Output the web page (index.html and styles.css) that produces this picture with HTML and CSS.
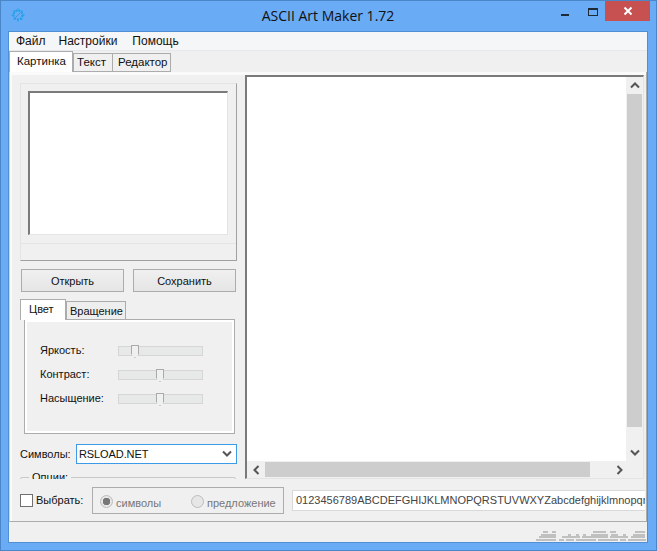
FILE: index.html
```html
<!DOCTYPE html>
<html lang="ru">
<head>
<meta charset="utf-8">
<title>ASCII Art Maker 1.72</title>
<link rel="stylesheet" href="styles.css">
</head>
<body>
<div class="window">
  <header class="titlebar">
    <svg class="app-icon" width="16" height="16" viewBox="0 0 16 16"><circle cx="8" cy="8" r="4.500" fill="none" stroke="#1f9fe8" stroke-width="2" stroke-dasharray="2 1"/><path d="M8 1.500v2M8 12.500v2M1.500 8h2M12.500 8h2M3.500 3.500l1.500 1.500M11 11l1.500 1.500M3.500 12.500L5 11M11 5l1.500-1.500" stroke="#2aa5ea" stroke-width="1.300"/><path d="M6 10l4-4" stroke="#3a95dc" stroke-width="1"/></svg>
    <div class="title">ASCII Art Maker 1.72</div>
    <div class="controls">
      <svg class="ctl" width="27" height="20" viewBox="0 0 27 20"><rect x="5" y="12" width="8" height="2" fill="#1f2a38"/></svg>
      <svg class="ctl" width="22" height="20" viewBox="0 0 22 20"><rect x="5.500" y="7.500" width="9" height="7" fill="none" stroke="#1f2a38" transform="translate(0 -1)"/><rect x="5" y="6" width="10" height="2" fill="#1f2a38"/></svg>
      <div class="close"><svg width="10" height="10" viewBox="0 0 10 10"><path d="M1.500 1.500l7 7M8.500 1.500l-7 7" stroke="#fff" stroke-width="2"/></svg></div>
    </div>
  </header>
  <div class="client">
    <nav class="menu"><span>Файл</span><span>Настройки</span><span>Помощь</span></nav>
    <div class="tabs">
      <div class="tab active">Картинка</div>
      <div class="tab">Текст</div>
      <div class="tab">Редактор</div>
    </div>
    <div class="page">
      <div class="main">
        <div class="left">
          <div class="preview-group">
            <div class="preview"></div>
            <div class="preview-status"></div>
          </div>
          <div class="buttons">
            <button class="btn">Открыть</button>
            <button class="btn">Сохранить</button>
          </div>
          <div class="subtabs">
            <div class="subtab active">Цвет</div>
            <div class="subtab">Вращение</div>
          </div>
          <div class="subpage">
            <div class="slider-row"><label>Яркость:</label><div class="track"><i class="thumb t1"></i></div></div>
            <div class="slider-row"><label>Контраст:</label><div class="track"><i class="thumb t2"></i></div></div>
            <div class="slider-row"><label>Насыщение:</label><div class="track"><i class="thumb t2"></i></div></div>
          </div>
          <div class="symbols">
            <label>Символы:</label>
            <div class="combo"><span>RSLOAD.NET</span>
              <svg width="10" height="7" viewBox="0 0 10 7"><path d="M1 1.500l4 4 4-4" fill="none" stroke="#555" stroke-width="2"/></svg>
            </div>
          </div>
          <fieldset class="options"><legend>Опции:</legend></fieldset>
        </div>
        <div class="viewer">
          <div class="viewer-top">
            <div class="text-area"></div>
            <div class="vscroll">
              <div class="arrow"><svg width="10" height="7" viewBox="0 0 10 7"><path d="M1 5.500l4-4 4 4" fill="none" stroke="#555" stroke-width="2"/></svg></div>
              <div class="vthumb"></div>
              <div class="arrow"><svg width="10" height="7" viewBox="0 0 10 7"><path d="M1 1.500l4 4 4-4" fill="none" stroke="#555" stroke-width="2"/></svg></div>
            </div>
          </div>
          <div class="hscroll">
            <div class="arrow-h"><svg width="7" height="10" viewBox="0 0 7 10"><path d="M5.500 1l-4 4 4 4" fill="none" stroke="#555" stroke-width="2"/></svg></div>
            <div class="hthumb"></div>
            <div class="arrow-h"><svg width="7" height="10" viewBox="0 0 7 10"><path d="M1.500 1l4 4-4 4" fill="none" stroke="#555" stroke-width="2"/></svg></div>
            <div class="corner"></div>
          </div>
        </div>
      </div>
      <div class="bottom">
        <label class="check"><i class="box"></i>Выбрать:</label>
        <div class="radios">
          <span class="radio r1"><i class="dot on"></i><span class="rtext">символы</span></span>
          <span class="radio"><i class="dot"></i><span class="rtext">предложение</span></span>
        </div>
        <div class="charset">0123456789ABCDEFGHIJKLMNOPQRSTUVWXYZabcdefghijklmnopqrstuvwxyz</div>
      </div>
    </div>
    <div class="statusbar">
      <svg width="110" height="10" viewBox="0 0 110 10"><path d="M7 1h5M16 1h4M57 1h13M74 1h6M99 1h10M5 4h15M32 4h3M40 4h3M47 4h3M55 4h17M75 4h7M87 4h3M97 4h12M3 6h17M26 6h18M46 6h26M74 6h18M95 6h14M0 9h20M23 9h5M30 9h8M40 9h20M62 9h20M84 9h6M92 9h18" stroke="#c0c0c0" stroke-width="2" fill="none"/></svg>
    </div>
  </div>
</div>
</body>
</html>
```
FILE: styles.css
```css
* { box-sizing: border-box; }
html, body { margin: 0; padding: 0; }
body { width: 657px; height: 551px; overflow: hidden; font-family: "Liberation Sans", Arial, sans-serif; font-size: 11px; color: #111; }
.window { width: 657px; height: 551px; background: #6aabf5; border: 1px solid #4a86c8; padding: 0 8px 7px 7px; display: flex; flex-direction: column; }
.titlebar { height: 30px; display: flex; align-items: center; flex: none; }
.app-icon { margin-left: 2px; margin-top: -2px; flex: none; }
.title { flex: 1; text-align: center; font-family: "Open Sans", sans-serif; font-size: 14px; color: #111; margin-top: -2px; margin-left: 76px; }
.controls { display: flex; align-items: flex-start; align-self: flex-start; width: 94px; justify-content: flex-end; flex: none; }
.ctl { display: block; margin-top: 1px; }
.close { width: 45px; height: 20px; margin-right: -2px; background: #c75050; display: flex; align-items: center; justify-content: center; }
.client { flex: 1; display: flex; flex-direction: column; background: #f0f0f0; border: 1px solid #4f8fd2; min-height: 0; }
.menu { height: 19px; flex: none; background: #f5f6f7; border-bottom: 1px solid #e8e8e8; display: flex; align-items: center; padding-left: 7px; gap: 14px; font-size: 12px; }
.menu span + span { margin-left: -1px; }
.menu span + span + span { margin-left: 1px; }
.tabs { height: 21px; flex: none; display: flex; align-items: flex-end; background: #f0f0f0; position: relative; z-index: 2; margin-bottom: -1px; font-size: 11.500px; }
.tab { height: 19px; width: 40px; padding: 0 3px; line-height: 17px; background: #f0f0f0; border: 1px solid #acacac; }
.tab + .tab + .tab { padding: 0 3px 0 5px; margin-left: -1px; width: 59px; }
.tab.active { height: 21px; width: 64px; background: #fff; padding: 0 7px; line-height: 18px; border-bottom: 0; }
.page { flex: none; height: 451px; background: #fafafa; border: 1px solid #acacac; border-left-color: #d4d4d4; padding: 3px 0 0 2px; display: flex; flex-direction: column; overflow: hidden; }
.main { height: 404px; flex: none; display: flex; overflow: hidden; background: #f0f0f0; }
.left { width: 233px; flex: none; padding: 8px 0 0 8px; }
.preview-group { width: 217px; height: 178px; border: 1px solid #e4e4e4; border-right-color: #a0a0a0; border-bottom-color: #a0a0a0; padding: 7px 8px 0 7px; display: flex; flex-direction: column; }
.preview { height: 144px; background: #fff; border: 2px solid #7a7a7a; border-right: 1px solid #e4e4e4; border-bottom: 1px solid #e4e4e4; flex: none; }
.preview-status { margin: 8px -8px 0 -7px; flex: 1; border-top: 1px solid #e4e4e4; }
.buttons { display: flex; gap: 9px; margin: 8px 0 0 1px; }
.btn { width: 103px; height: 23px; padding: 0; background: linear-gradient(#f0f0f0, #e5e5e5); border: 1px solid #acacac; font: 11px "Liberation Sans", Arial, sans-serif; color: #111; }
.subtabs { display: flex; align-items: flex-end; height: 21px; margin-top: 7px; position: relative; z-index: 1; margin-bottom: -1px; }
.subtab { height: 19px; width: 60px; padding: 0 3px; line-height: 19px; background: #eeeeee; border: 1px solid #acacac; }
.subtab.active { height: 21px; width: 46px; background: #fff; border-bottom: 0; padding: 0 8px; line-height: 18px; }
.subpage { margin-left: 4px; width: 211px; height: 115px; background: #f0f0f0; border: 1px solid #acacac; box-shadow: inset 0 0 0 2px #fff; padding: 26px 0 0 15px; display: flex; flex-direction: column; gap: 14px; }
.slider-row { display: flex; align-items: center; height: 10px; }
.slider-row label { width: 78px; margin-top: -3px; }
.track { width: 85px; height: 10px; background: #e7e9e9; border: 1px solid #d6d6d6; position: relative; }
.thumb { position: absolute; top: -2px; width: 8px; height: 13px; background: #f0f0f0; border: 1px solid #aaa; clip-path: polygon(0 0, 100% 0, 100% 70%, 50% 100%, 0 70%); }
.t1 { left: 12px; }
.t2 { left: 37px; }
.symbols { display: flex; align-items: center; margin-top: 10px; }
.symbols label { width: 56px; margin-top: -1px; }
.combo { width: 161px; height: 20px; background: #fff; border: 1px solid #3d9ae8; display: flex; align-items: center; justify-content: space-between; padding: 0 4px 1px 2px; letter-spacing: -.1px; }
.options { margin: 7px 0 0 0; width: 216px; height: 30px; border: 1px solid #c8c8c8; border-radius: 2px; padding: 0 0 0 8px; }
.options legend { padding: 0 3px; }
.viewer { width: 399px; flex: none; height: 404px; display: flex; flex-direction: column; border-top: 2px solid #7a7a7a; border-left: 2px solid #7a7a7a; border-right: 1px solid #e4e4e4; border-bottom: 1px solid #e4e4e4; background: #f0f0f0; }
.viewer-top { flex: 1; display: flex; min-height: 0; }
.text-area { flex: 1; background: #fff; }
.vscroll { width: 17px; flex: none; display: flex; flex-direction: column; }
.arrow { height: 17px; display: flex; align-items: center; justify-content: center; flex: none; }
.vthumb { flex: 1; margin: 0 1px; background: #cdcdcd; }
.vscroll .arrow:last-child { margin-top: 17px; }
.hscroll { height: 17px; flex: none; display: flex; }
.arrow-h { width: 18px; display: flex; align-items: center; justify-content: center; flex: none; }
.hthumb { width: 325px; margin: 1px 0; background: #cdcdcd; flex: none; }
.hscroll .arrow-h:nth-child(3) { margin-left: 20px; }
.corner { flex: 1; }
.bottom { flex: 1; display: flex; align-items: center; padding-left: 8px; background: #f0f0f0; }
.check { display: flex; align-items: center; width: 72px; flex: none; gap: 3px; }
.box { width: 13px; height: 13px; border: 1px solid #707070; background: #fff; display: block; }
.radios { width: 192px; height: 27px; border: 1px solid #acacac; display: flex; align-items: center; padding: 2px 0 0 7px; flex: none; color: #777; }
.radio { display: flex; align-items: center; gap: 3px; line-height: 15px; }
.rtext { margin-top: 5px; }
.r1 { width: 91px; }
.dot { width: 13px; height: 13px; border: 1px solid #bcbcbc; background: #e6e6e6; border-radius: 50%; display: block; }
.dot.on { background: radial-gradient(circle, #777 3.500px, #e6e6e6 4px); }
.charset { margin-left: 8px; width: 353px; height: 21px; background: #fff; border: 1px solid #d9d9d9; border-right: 0; line-height: 19px; padding-left: 3px; white-space: nowrap; overflow: hidden; color: #444; }
.statusbar { flex: 1; display: flex; justify-content: flex-end; align-items: flex-end; padding: 0 1px 1px 0; background: #f0f0f0; }
```
